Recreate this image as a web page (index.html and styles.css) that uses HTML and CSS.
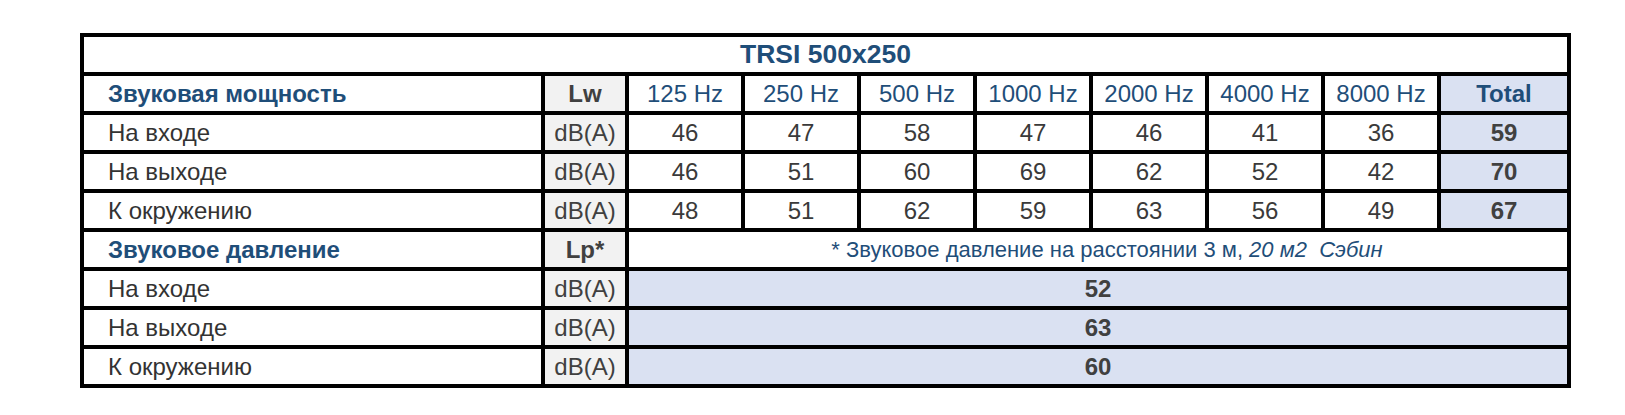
FILE: index.html
```html
<!DOCTYPE html>
<html lang="ru">
<head>
<meta charset="utf-8">
<title>TRSI 500x250</title>
<link rel="stylesheet" href="styles.css">
</head>
<body>
<div class="page">
  <div class="sheet">
    <div class="cell title">TRSI 500x250</div>

    <div class="cell label head">Звуковая мощность</div>
    <div class="cell unit strong">Lw</div>
    <div class="cell freq">125 Hz</div>
    <div class="cell freq">250 Hz</div>
    <div class="cell freq">500 Hz</div>
    <div class="cell freq">1000 Hz</div>
    <div class="cell freq">2000 Hz</div>
    <div class="cell freq">4000 Hz</div>
    <div class="cell freq">8000 Hz</div>
    <div class="cell total head-total">Total</div>

    <div class="cell label">На входе</div>
    <div class="cell unit">dB(A)</div>
    <div class="cell val">46</div>
    <div class="cell val">47</div>
    <div class="cell val">58</div>
    <div class="cell val">47</div>
    <div class="cell val">46</div>
    <div class="cell val">41</div>
    <div class="cell val">36</div>
    <div class="cell total">59</div>

    <div class="cell label">На выходе</div>
    <div class="cell unit">dB(A)</div>
    <div class="cell val">46</div>
    <div class="cell val">51</div>
    <div class="cell val">60</div>
    <div class="cell val">69</div>
    <div class="cell val">62</div>
    <div class="cell val">52</div>
    <div class="cell val">42</div>
    <div class="cell total">70</div>

    <div class="cell label">К окружению</div>
    <div class="cell unit">dB(A)</div>
    <div class="cell val">48</div>
    <div class="cell val">51</div>
    <div class="cell val">62</div>
    <div class="cell val">59</div>
    <div class="cell val">63</div>
    <div class="cell val">56</div>
    <div class="cell val">49</div>
    <div class="cell total">67</div>

    <div class="cell label head">Звуковое давление</div>
    <div class="cell unit strong">Lp*</div>
    <div class="cell note">* Звуковое давление на расстоянии 3 м, <em>20 м2&nbsp; Сэбин</em></div>

    <div class="cell label">На входе</div>
    <div class="cell unit">dB(A)</div>
    <div class="cell merged">52</div>

    <div class="cell label">На выходе</div>
    <div class="cell unit">dB(A)</div>
    <div class="cell merged">63</div>

    <div class="cell label">К окружению</div>
    <div class="cell unit">dB(A)</div>
    <div class="cell merged">60</div>
  </div>
</div>
</body>
</html>
```

FILE: styles.css
```css
html, body {
  margin: 0;
  padding: 0;
  background: #ffffff;
}

.page {
  padding: 33px 0 0 80px;
  font-family: "Liberation Sans", Arial, sans-serif;
}

.sheet {
  display: grid;
  grid-template-columns: 457px 80px repeat(7, 112px) 126px;
  grid-auto-rows: 35px;
  gap: 4px;
  padding: 4px;
  background: #000000;
  width: max-content;
}

.cell {
  background: #ffffff;
  display: flex;
  align-items: center;
  justify-content: center;
  font-size: 24px;
  color: #3a3a3a;
  white-space: nowrap;
}

.title {
  grid-column: 1 / -1;
  font-size: 26.5px;
  font-weight: bold;
  color: #1f4e79;
}

.label {
  justify-content: flex-start;
  padding-left: 24px;
  color: #333333;
}

.label.head {
  font-weight: bold;
  color: #1f4e79;
}

.unit {
  background: #f2f2f2;
  color: #404040;
}

.unit.strong {
  font-weight: bold;
}

.freq {
  color: #1f4e79;
}

.val {
  color: #3a3a3a;
}

.total {
  background: #dae1f2;
  font-weight: bold;
  color: #404040;
}

.head-total {
  color: #1f4e79;
}

.note {
  grid-column: 3 / -1;
  font-size: 22px;
  color: #1f4e79;
  padding-left: 18px;
}

.note em {
  font-style: italic;
  margin-left: 6px;
}

.merged {
  grid-column: 3 / -1;
  background: #dae1f2;
  font-weight: bold;
  color: #404040;
}
```
